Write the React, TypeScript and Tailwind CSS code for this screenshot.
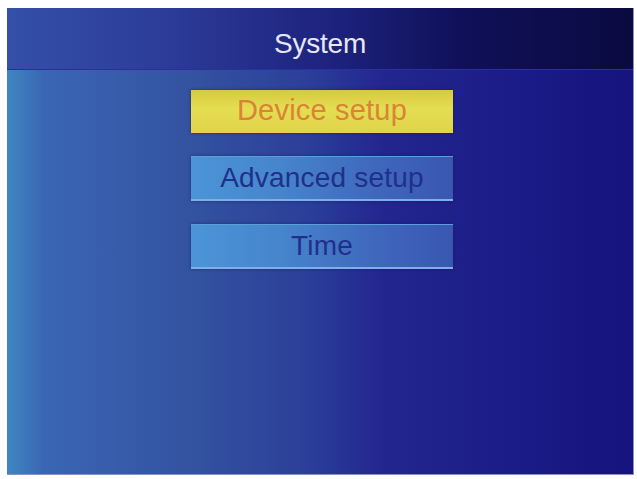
export default function App() {
    const items = [
        { label: 'Device setup', active: true },
        { label: 'Advanced setup', active: false },
        { label: 'Time', active: false },
    ]

    return (
        <main className="w-[637px] h-[479px] bg-white pt-[8px] pl-[7px] pr-[3px] pb-[4px] font-['Liberation_Sans',Arial,sans-serif]">
            <div className="h-full flex flex-col bg-[linear-gradient(90deg,#3f86c0_0%,#3a66b4_6%,#33529f_30%,#2b3f9a_48%,#23268e_60%,#1c1c88_80%,#15137e_100%)] border-r border-b border-[#8a90c8]">
                {/* Title bar */}
                <div className="h-[62px] flex items-center justify-center bg-[linear-gradient(90deg,#3450a8_0%,#2c3c98_25%,#1e2480_50%,#10105a_72%,#0a0a40_100%)] border-b border-[#2a2fa0]">
                    <h1 className="text-[#e6e8f4] text-[28px] tracking-[-0.2px] mt-[10px]">System</h1>
                </div>

                {/* Menu */}
                <div className="flex flex-col items-center pt-[20px] gap-[23px] pl-[4px]">
                    {items.map((item) =>
                        item.active ? (
                            <div
                                key={item.label}
                                className="w-[262px] h-[43px] flex items-center justify-center bg-[linear-gradient(180deg,#d8c83e_0%,#e4de52_45%,#e0d44a_100%)] border-b-2 border-[#f0c860] shadow-[0_0_3px_rgba(20,20,80,0.6)]"
                            >
                                <span className="text-[#d97b35] text-[29px] tracking-[0.2px] opacity-90">{item.label}</span>
                            </div>
                        ) : (
                            <div
                                key={item.label}
                                className="w-[262px] h-[45px] flex items-center justify-center bg-[linear-gradient(90deg,#4b95d6_0%,#4684cc_35%,#3f68bd_70%,#3a56b0_100%)] border-t border-[#5a9fdc] border-b-2 border-b-[#7cb0e6] shadow-[0_0_3px_rgba(20,20,80,0.5)]"
                            >
                                <span className="text-[#20308a] text-[28px] tracking-[0.2px]">{item.label}</span>
                            </div>
                        )
                    )}
                </div>
            </div>
        </main>
    )
}
